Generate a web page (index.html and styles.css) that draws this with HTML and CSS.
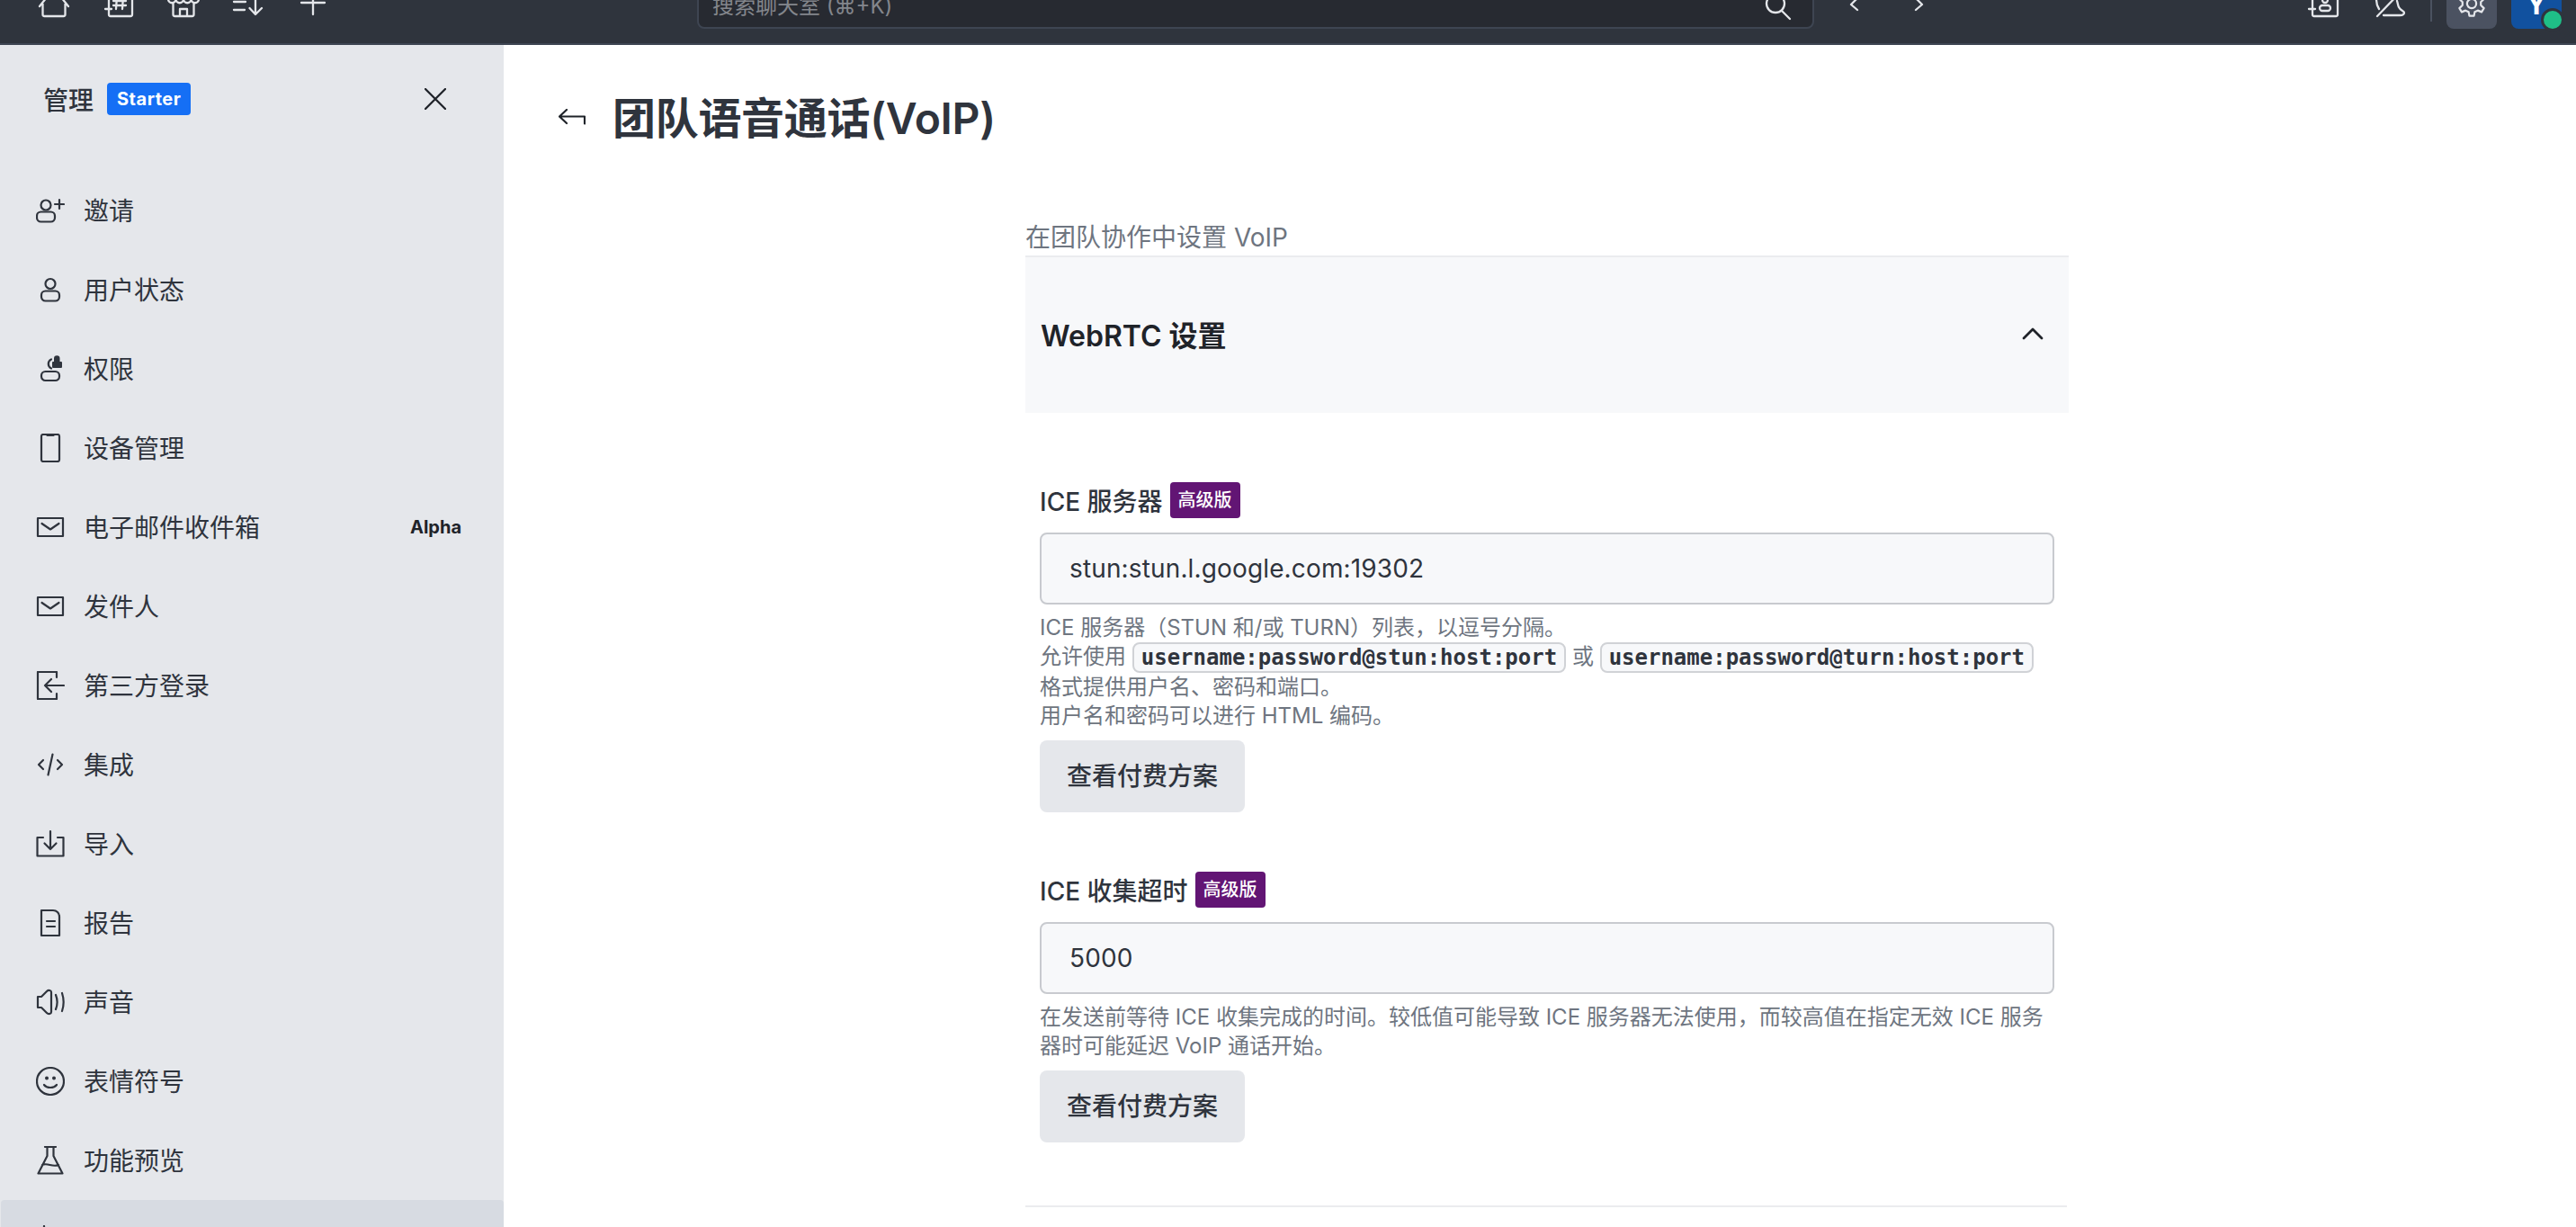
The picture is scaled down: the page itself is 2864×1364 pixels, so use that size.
FILE: index.html
```html
<!DOCTYPE html>
<html lang="zh-CN">
<head>
<meta charset="utf-8">
<title>团队语音通话(VoIP)</title>
<link rel="stylesheet" href="styles.css">
</head>
<body>
<header class="topbar">
  <nav class="top-group">
    <svg class="tico" viewBox="0 0 40 40"><path d="M4 27 20 7l16 20M7.500 24v12a2 2 0 0 0 2 2h21a2 2 0 0 0 2-2V24"/></svg>
    <svg class="tico" viewBox="0 0 40 40"><path d="M9 16v20a2 2 0 0 0 2 2h22a2 2 0 0 0 2-2V16M5 30h7M18 16l-1 14M25 16l-1 14M14 21h14M14 26h14"/></svg>
    <svg class="tico" viewBox="0 0 40 40"><path d="M3 19a4 4 0 0 0 8.500 0 4 4 0 0 0 8.500 0 4 4 0 0 0 8.500 0 4 4 0 0 0 8.500 0M8.500 24v12a2 2 0 0 0 2 2h19a2 2 0 0 0 2-2V24M16 38v-8h8v8"/></svg>
    <svg class="tico" viewBox="0 0 40 40"><path d="M4 22h13M4 31h12M28 14v22M21.500 29l6.500 7 7-7"/></svg>
    <svg class="tico" viewBox="0 0 40 40"><path d="M7 23h26M20 10v26"/></svg>
  </nav>
  <div class="search">
    <span class="search-text">搜索聊天室 (⌘+K)</span>
    <svg class="search-ico" viewBox="0 0 40 40"><circle cx="19" cy="20" r="10"/><path d="m26 28 9 9"/></svg>
  </div>
  <nav class="top-group history">
    <svg class="tico" viewBox="0 0 40 40"><path d="M24 20 17 27l7 6"/></svg>
    <svg class="tico" viewBox="0 0 40 40"><path d="m17 20 7 7-7 6"/></svg>
  </nav>
  <div class="top-right">
    <svg class="tico" viewBox="0 0 40 40"><path d="M7 16v20a2 2 0 0 0 2 2h24a2 2 0 0 0 2-2V16M3 30h7"/><circle cx="21" cy="20" r="3"/><rect x="15" y="26" width="12" height="6" rx="3"/></svg>
    <svg class="tico" viewBox="0 0 40 40"><path d="M6 38 33 10M5 19c0 6 1 8 3 11M13 37h18c4 0 5-2 5-3 0-2-4-2-6-6-1-2-1-4-2-7"/></svg>
    <span class="sep"></span>
    <span class="gear-btn">
      <svg class="gear" viewBox="0 0 40 40"><circle cx="20" cy="20" r="6"/><path d="M17 4h6l1 5 4 2 5-2 3 5-4 4v4l4 4-3 5-5-2-4 2-1 5h-6l-1-5-4-2-5 2-3-5 4-4v-4l-4-4 3-5 5 2 4-2z"/></svg>
    </span>
    <span class="avatar"><span class="avatar-letter">Y</span><span class="status-dot"></span></span>
  </div>
</header>

<div class="shell">
  <aside class="sidebar">
    <div class="side-head">
      <span class="side-title">管理</span>
      <span class="starter">Starter</span>
      <svg class="close" viewBox="0 0 24 24"><path d="M1 1l22 22M23 1 1 23"/></svg>
    </div>
    <ul class="menu">
      <li class="row"><svg class="ico" viewBox="0 0 32 32"><circle cx="11" cy="10" r="5.500"/><rect x="1" y="17.500" width="20" height="11" rx="4.500"/><path d="M26 4v10M21 9h10"/></svg><span class="row-text">邀请</span></li>
      <li class="row"><svg class="ico" viewBox="0 0 32 32"><circle cx="16" cy="9.500" r="5.500"/><rect x="6" y="17.500" width="20" height="11" rx="4.500"/></svg><span class="row-text">用户状态</span></li>
      <li class="row"><svg class="ico" viewBox="0 0 32 32"><path d="M17 5.500a5.500 5.500 0 0 0 0 10"/><rect x="6" y="19" width="20" height="10" rx="4.500"/><path class="solid" d="M19 8h1v-3.500a3 3 0 0 1 6.500 0V8h1.500a1 1 0 0 1 1 1v5a1 1 0 0 1-1 1H19a1 1 0 0 1-1-1V9a1 1 0 0 1 1-1z"/></svg><span class="row-text">权限</span></li>
      <li class="row"><svg class="ico" viewBox="0 0 32 32"><rect x="6" y="1" width="20" height="30" rx="2"/><path d="M12.500 2h7"/></svg><span class="row-text">设备管理</span></li>
      <li class="row"><svg class="ico" viewBox="0 0 32 32"><rect x="2" y="6" width="28" height="20"/><path d="m6.500 12 9.500 6.500 9.500-6.500"/></svg><span class="row-text">电子邮件收件箱</span><span class="alpha">Alpha</span></li>
      <li class="row"><svg class="ico" viewBox="0 0 32 32"><rect x="2" y="6" width="28" height="20"/><path d="m6.500 12 9.500 6.500 9.500-6.500"/></svg><span class="row-text">发件人</span></li>
      <li class="row"><svg class="ico" viewBox="0 0 32 32"><path d="M23 7V1H2v30h21v-6M31 16H10M17 9l-7 7 7 7"/></svg><span class="row-text">第三方登录</span></li>
      <li class="row"><svg class="ico" viewBox="0 0 32 32"><path d="m8 11-5 5 5 5M24 11l5 5-5 5M18.500 4.500l-5 23"/></svg><span class="row-text">集成</span></li>
      <li class="row"><svg class="ico" viewBox="0 0 32 32"><path d="M8 9H1.500v20.500h29V9H24M16 2v20M9.500 15.500 16 22l6.500-6.500"/></svg><span class="row-text">导入</span></li>
      <li class="row"><svg class="ico" viewBox="0 0 32 32"><path d="M6 2h13c4 0 7 3 7 7v21H6zM12 14h9M12 20h9"/></svg><span class="row-text">报告</span></li>
      <li class="row"><svg class="ico" viewBox="0 0 32 32"><path d="M2 10h4l6-6c2-2 5-1 5 1v22c0 2-3 3-5 1l-6-6H2zM22 8c2 5 2 11 0 16M29 6c2 6 2 14 0 20"/></svg><span class="row-text">声音</span></li>
      <li class="row"><svg class="ico" viewBox="0 0 32 32"><circle cx="16" cy="16" r="15"/><path class="solid" d="M10 12.500a2 2 0 1 0 4 0 2 2 0 0 0-4 0M18 12.500a2 2 0 1 0 4 0 2 2 0 0 0-4 0"/><path d="M9 20c3 4 11 4 14 0"/></svg><span class="row-text">表情符号</span></li>
      <li class="row"><svg class="ico" viewBox="0 0 32 32"><path d="M10 1h12M12.500 1v10L2.500 30.500h27L19.500 11V1M7 21c6-3 11 3 18 0"/></svg><span class="row-text">功能预览</span></li>
      <li class="row active"><svg class="ico" viewBox="0 0 32 32"><path d="M9 1v8M9 15v16M23 4v13M23 23v8M5 12h8M19 20h8"/></svg></li>
    </ul>
  </aside>

  <main class="content">
    <div class="page-head">
      <svg class="back" viewBox="0 0 30 18"><path d="M9 1 1 8.500 9 16M1 8.500h28v8"/></svg>
      <h1 class="page-title">团队语音通话(VoIP)</h1>
    </div>
    <div class="page-body">
      <p class="intro">在团队协作中设置 VoIP</p>
      <section class="panel">
        <div class="panel-head">
          <h2 class="panel-title">WebRTC 设置</h2>
          <svg class="chev" viewBox="0 0 24 14"><path d="M2 12 12 2l10 10"/></svg>
        </div>
        <div class="field">
          <div class="label-row"><label class="label">ICE 服务器</label><span class="pro">高级版</span></div>
          <div class="input">stun:stun.l.google.com:19302</div>
          <p class="help">ICE 服务器&#xFF08;STUN 和/或 TURN&#xFF09;列表&#xFF0C;以逗号分隔。<br>允许使用 <code class="code">username:password@stun:host:port</code> 或 <code class="code">username:password@turn:host:port</code><br>格式提供用户名、密码和端口。<br>用户名和密码可以进行 HTML 编码。</p>
          <button class="btn">查看付费方案</button>
        </div>
        <div class="field second">
          <div class="label-row"><label class="label">ICE 收集超时</label><span class="pro">高级版</span></div>
          <div class="input">5000</div>
          <p class="help">在发送前等待 ICE 收集完成的时间。较低值可能导致 ICE 服务器无法使用&#xFF0C;而较高值在指定无效 ICE 服务器时可能延迟 VoIP 通话开始。</p>
          <button class="btn">查看付费方案</button>
        </div>
      </section>
      <hr class="divider">
    </div>
  </main>
</div>
</body>
</html>
```
FILE: styles.css
```css
* { box-sizing: border-box; }
html, body { height: 100%; }
body {
  margin: 0;
  overflow: hidden;
  display: flex;
  flex-direction: column;
  background: #fff;
  color: #2f343d;
  font-family: Inter, "Noto Sans CJK SC", sans-serif;
}

.topbar {
  flex: 0 0 50px;
  height: 50px;
  display: flex;
  align-items: flex-end;
  padding: 0 16px 16px 40px;
  background: #2f343d;
  border-bottom: 2px solid #3e4552;
}
.top-group { display: flex; gap: 32px; margin-bottom: 12px; }
.tico { display: block; flex: none; width: 40px; height: 40px; fill: none; stroke: #e4e6ea; stroke-width: 2.300; stroke-linecap: round; stroke-linejoin: round; }
.search {
  flex: none;
  width: 1242px;
  height: 56px;
  margin-left: 407px;
  padding: 0 20px 0 15px;
  display: flex;
  align-items: center;
  justify-content: space-between;
  background: #272a31;
  border: 2px solid #3e4552;
  border-radius: 8px;
}
.search-text { font-size: 24px; color: #83868c; }
.search-ico { width: 40px; height: 40px; fill: none; stroke: #e4e6ea; stroke-width: 2.300; stroke-linecap: round; }
.history { margin-left: 24px; margin-bottom: 14px; }
.top-right { margin-left: auto; display: flex; align-items: flex-end; }
.top-right > .tico { margin-right: 33px; margin-bottom: 12px; }
.sep { width: 2px; height: 50px; margin: 0 16px 8px -8px; background: #4b5260; }
.gear-btn { width: 56px; height: 56px; margin-right: 16px; display: flex; align-items: center; justify-content: center; background: #4b5261; border-radius: 8px; }
.gear { width: 34px; height: 34px; fill: none; stroke: #e4e6ea; stroke-width: 2.600; stroke-linejoin: round; }
.avatar {
  position: relative;
  width: 56px;
  height: 56px;
  display: flex;
  align-items: center;
  justify-content: center;
  background: #11519f;
  border-radius: 8px;
  color: #fff;
  font-size: 32px;
  font-weight: 700;
}
.status-dot {
  position: absolute;
  right: -3px;
  bottom: -3px;
  width: 26px;
  height: 26px;
  background: #1fbf87;
  border: 3px solid #2f343d;
  border-radius: 50%;
}

.shell { flex: 1; min-height: 0; display: flex; }

/* sidebar */
.sidebar { flex: 0 0 560px; width: 560px; background: #e5e7eb; overflow: hidden; }
.side-head { height: 140px; display: flex; align-items: center; padding: 0 64px 20px 48px; }
.side-title { font-size: 28px; font-weight: 500; color: #2f343d; }
.starter { margin-left: 15px; padding: 0 11px; height: 36px; line-height: 36px; border-radius: 4px; background: #156ff5; color: #fff; font-size: 20px; font-weight: 700; letter-spacing: .5px; }
.close { margin-left: auto; width: 24px; height: 24px; fill: none; stroke: #1f2329; stroke-width: 2.300; stroke-linecap: round; }
.menu { list-style: none; margin: 0; padding: 0; }
.row { height: 88px; display: flex; align-items: center; padding: 0 47px 0 40px; font-size: 28px; color: #2f343d; }
.row-text { margin-bottom: 3px; }
.row.active { background: #d7dbe2; border-radius: 4px; margin-left: 1px; padding-left: 39px; }
.ico { flex: none; width: 32px; height: 32px; margin-right: 21px; fill: none; stroke: #2f343d; stroke-width: 2.200; stroke-linecap: round; stroke-linejoin: round; }
.ico .solid { fill: #2f343d; stroke: none; }
.alpha { margin-left: auto; font-size: 20px; font-weight: 700; color: #1f2329; }

/* content */
.content { flex: 1; min-width: 0; overflow: hidden; }
.page-head { height: 114px; padding-top: 50px; padding-left: 61px; display: flex; align-items: flex-start; gap: 30px; }
.back { width: 30px; height: 18px; margin-top: 21px; fill: none; stroke: #1f2329; stroke-width: 2.200; stroke-linecap: round; stroke-linejoin: round; }
.page-title { margin: 0; font-size: 48px; line-height: 64px; font-weight: 600; letter-spacing: -.3px; color: #2f343d; }
.page-body { width: 1176px; margin: 80px auto 0; padding-left: 16px; }
.intro { margin: 0; font-size: 28px; line-height: 40px; color: #6e7580; }
.panel-head {
  height: 175px;
  padding: 0 24px 4px 17px;
  display: flex;
  align-items: center;
  justify-content: space-between;
  background: #f7f8fa;
  border-top: 2px solid #ebecef;
}
.panel-title { margin: 0; font-size: 32px; font-weight: 600; color: #1f2329; }
.chev { width: 24px; height: 14px; margin-right: 4px; fill: none; stroke: #1f2329; stroke-width: 2.800; stroke-linecap: round; stroke-linejoin: round; }
.field { padding: 77px 16px 0; }
.field.second { padding-top: 66px; }
.label-row { display: flex; align-items: center; gap: 8px; height: 40px; margin-bottom: 16px; }
.label { font-size: 28px; font-weight: 500; color: #2f343d; }
.pro { height: 40px; padding: 0 9px; line-height: 40px; border-radius: 4px; background: #621574; color: #fff; font-size: 20px; font-weight: 500; }
.input { height: 80px; padding: 0 31px; display: flex; align-items: center; background: #f7f8fa; border: 2px solid #c8cacf; border-radius: 8px; font-size: 28px; letter-spacing: .14px; color: #2f343d; }
.help { margin: 10px 0 11px; font-size: 24px; line-height: 32px; color: #6e7580; }
.code { padding: 0 8px; background: #f7f8fa; border: 2px solid #d0d2d6; border-radius: 8px; font-family: "DejaVu Sans Mono", monospace; font-size: 24px; font-weight: 700; line-height: 30px; color: #2f343d; display: inline-block; vertical-align: middle; }
.btn { display: block; height: 80px; padding: 0 30px 5px; border: 0; border-radius: 8px; background: #e5e7eb; font: 500 28px Inter, "Noto Sans CJK SC", sans-serif; color: #2f343d; }
.divider { height: 2px; width: 1158px; margin: 70px 0 0; border: 0; background: #ebecef; }
```
